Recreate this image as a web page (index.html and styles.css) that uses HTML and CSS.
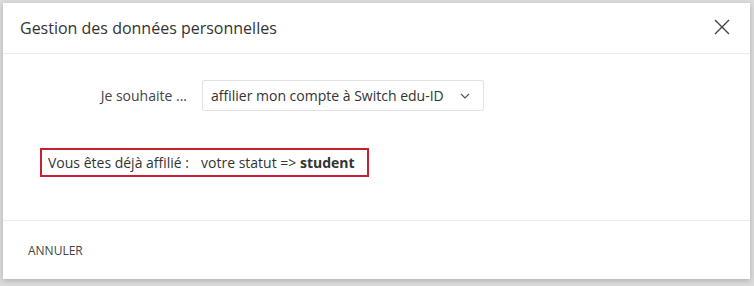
FILE: index.html
```html
<!DOCTYPE html>
<html lang="fr">
  <head>
    <meta charset="utf-8" />
    <meta name="viewport" content="width=device-width,initial-scale=1" />
    <title>Gestion des données personnelles</title>
    <link rel="stylesheet" href="styles.css">
  </head>
  <body>
    <div class="dialog">
      <div class="dialog-header">
        <div class="dialog-title">Gestion des données personnelles</div>
        <button class="dialog-close" aria-label="Fermer">
          <svg width="16" height="16" viewBox="0 0 16 16">
            <path d="M1 1 L15 15 M15 1 L1 15" stroke="#444" stroke-width="1.4" fill="none" />
          </svg>
        </button>
      </div>
      <div class="dialog-body">
        <div class="field">
          <label class="field-label">Je souhaite ...</label>
          <div class="select">
            <span>affilier mon compte à Switch edu-ID</span>
            <svg width="10" height="6" viewBox="0 0 10 6">
              <path d="M1 1 L5 5 L9 1" stroke="#555" stroke-width="1.2" fill="none" />
            </svg>
          </div>
        </div>
        <div class="status">
          <span class="status-label">Vous êtes déjà affilié :</span>
          <span>votre statut =&gt; <b>student</b></span>
        </div>
      </div>
      <div class="dialog-footer">
        <button class="btn-cancel">ANNULER</button>
      </div>
    </div>
  </body>
</html>
```

FILE: styles.css
```css
html {
  height: 100%;
}

body {
  margin: 0;
  height: 100%;
  background: #dcdcdc;
  padding: 3px 4px 7px 3px;
  box-sizing: border-box;
  font-family: "Open Sans", "Noto Sans", sans-serif;
  color: #333;
}

.dialog {
  background: white;
  height: 100%;
  display: flex;
  flex-direction: column;
  box-shadow: 0 2px 6px rgba(0, 0, 0, 0.2);
}

.dialog-header {
  height: 50px;
  border-bottom: 1px solid #ececec;
  display: flex;
  align-items: center;
  justify-content: space-between;
  padding: 0 20px 0 17px;
}

.dialog-title {
  font-size: 16px;
  color: #333;
}

.dialog-close {
  border: none;
  background: none;
  padding: 0;
  display: flex;
  margin-top: -3px;
}

.dialog-body {
  flex: 1;
  padding: 26px 0 0 37px;
}

.field {
  display: flex;
  align-items: center;
  gap: 15px;
}

.field-label {
  width: 147px;
  text-align: right;
  font-size: 14px;
  color: #444;
}

.select {
  width: 282px;
  height: 31px;
  box-sizing: border-box;
  border: 1px solid #e2e2e2;
  border-radius: 2px;
  display: flex;
  align-items: center;
  justify-content: space-between;
  padding: 0 13px 0 8px;
  font-size: 14px;
  color: #333;
}

.status {
  margin-top: 37px;
  width: 329px;
  height: 29px;
  box-sizing: border-box;
  border: 2px solid #c4202e;
  display: flex;
  align-items: center;
  padding-left: 6px;
  font-size: 14px;
  color: #333;
}

.status-label {
  width: 153px;
}

.dialog-footer {
  height: 58px;
  border-top: 1px solid #ececec;
  display: flex;
  align-items: center;
  padding-left: 25px;
}

.btn-cancel {
  border: none;
  background: none;
  font-family: inherit;
  font-size: 12px;
  color: #444;
  padding: 0;
}
```
